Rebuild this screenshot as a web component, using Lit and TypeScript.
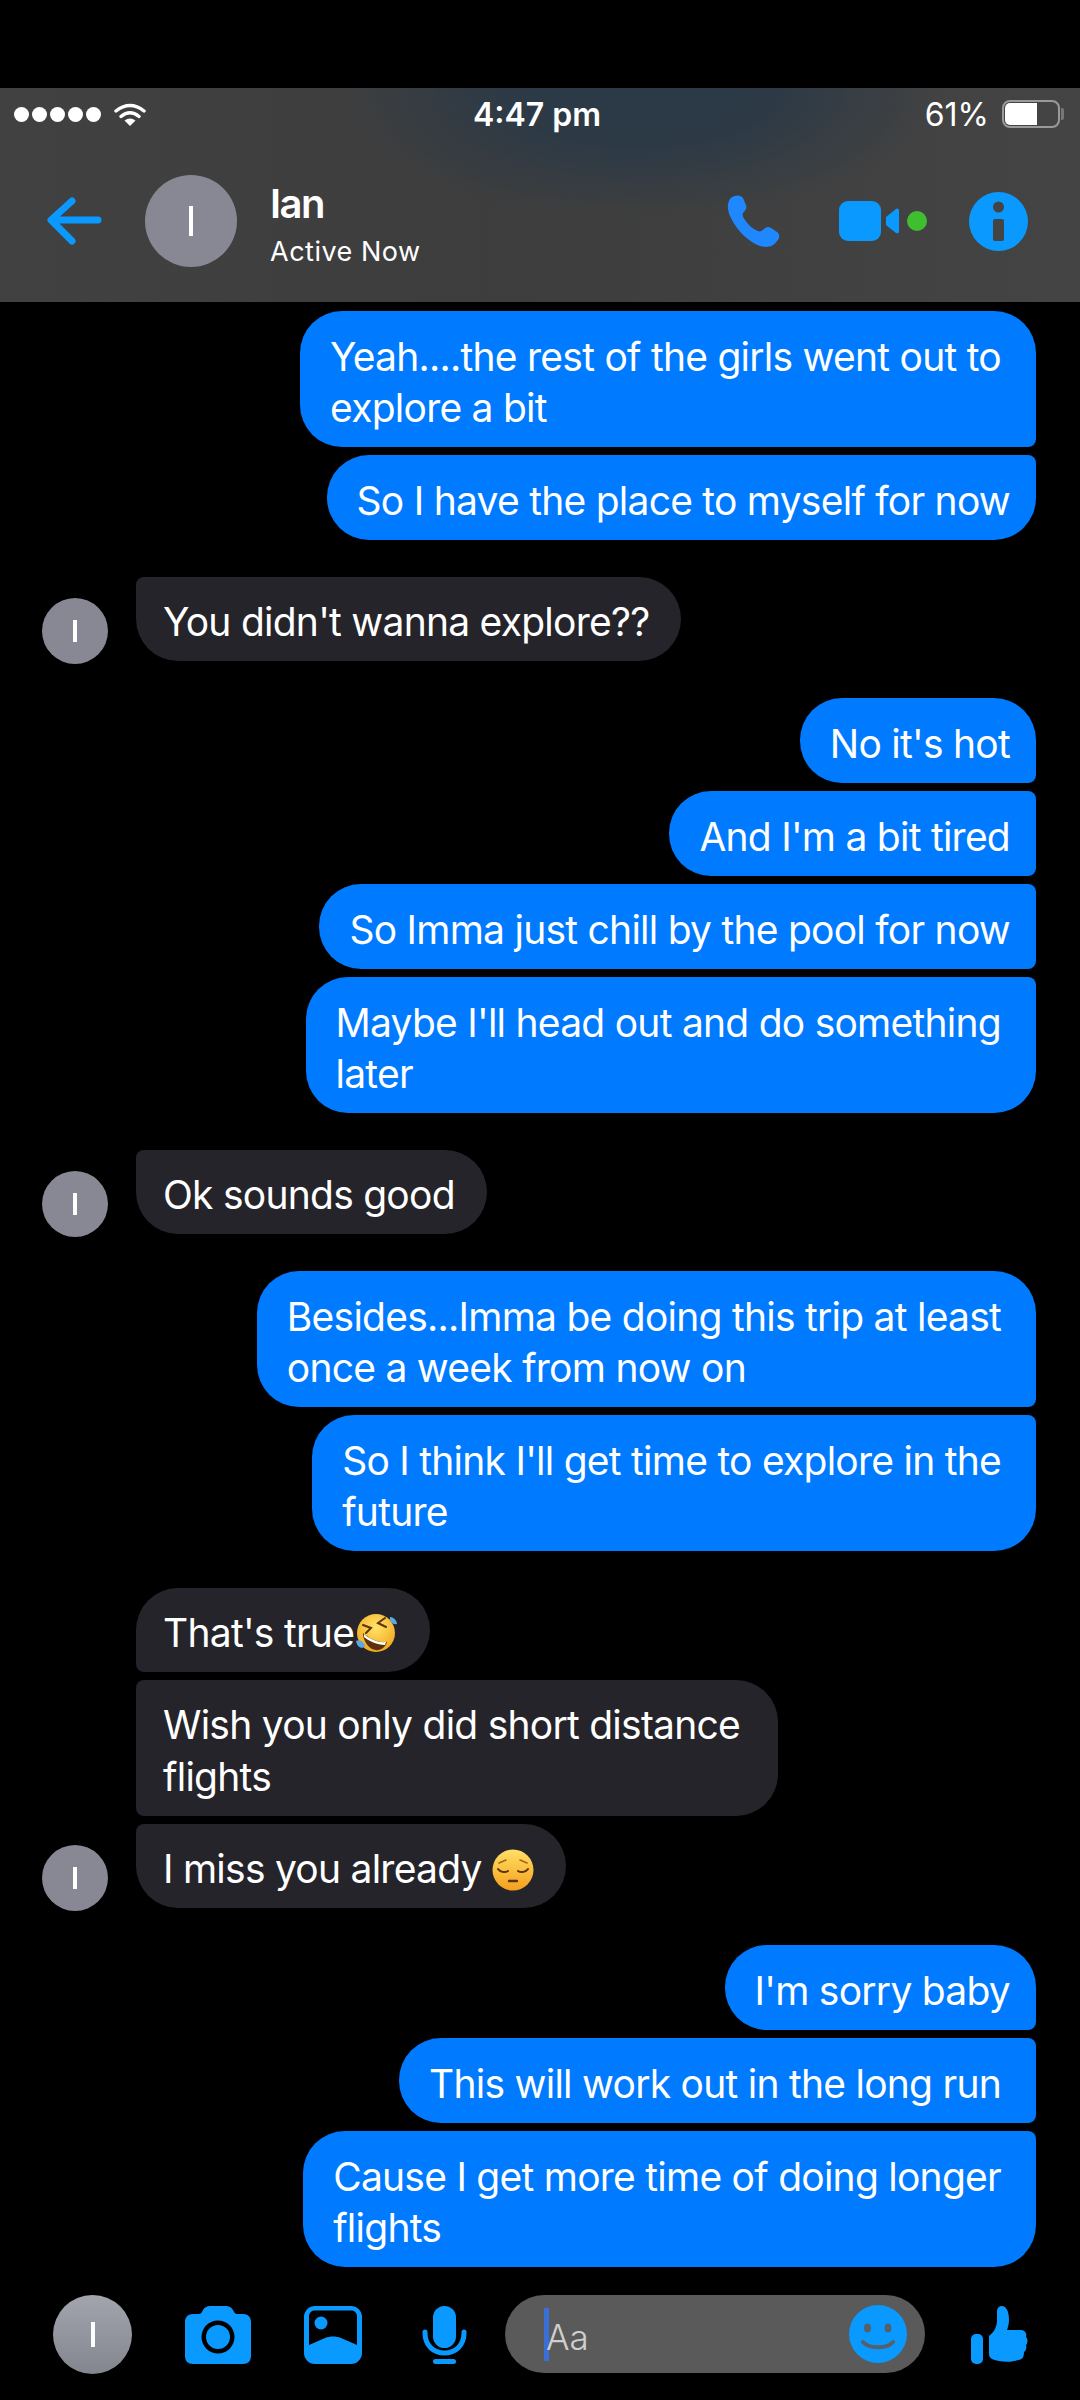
import { LitElement, html, css, svg } from "lit";
import { customElement } from "lit/decorators.js";

const rofl = html`<svg class="emoji rofl" viewBox="0 0 44 44">
  <defs>
    <radialGradient id="rg" cx="50%" cy="35%" r="65%"><stop offset="0" stop-color="#ffe46a"/><stop offset="1" stop-color="#f2a81e"/></radialGradient>
  </defs>
  <circle cx="22" cy="22" r="19" fill="url(#rg)"/>
  <path d="M9 22 C15 27 23 32 33 31 C31 38 24 41 18 38 C13 35 9 29 9 22Z" fill="#5e3208"/>
  <path d="M10 23 C16 28 24 32 32 31 L31 34 C23 34 15 30 10 26Z" fill="#fff"/>
  <path d="M9 14 L17 17 L12 22" fill="none" stroke="#5e3208" stroke-width="2" stroke-linecap="round"/>
  <path d="M31 7 L24 12 L32 16" fill="none" stroke="#5e3208" stroke-width="2" stroke-linecap="round"/>
  <path d="M2 30 C6 28 10 31 11 35 C8 39 3 36 2 30Z" fill="#5aa9e6"/>
  <path d="M36 6 C40 6 43 10 43 13 C39 14 35 11 36 6Z" fill="#5aa9e6"/>
</svg>`;

const pensive = html`<svg class="emoji" viewBox="0 0 42 42">
  <defs>
    <linearGradient id="pg" x1="0" y1="0" x2="0" y2="1"><stop offset="0" stop-color="#ffe066"/><stop offset="1" stop-color="#f59f1c"/></linearGradient>
  </defs>
  <circle cx="21" cy="21" r="20.5" fill="url(#pg)"/>
  <path d="M6 20 C8 23 13 24 16 22 M26 22 C29 24 34 23 36 20" fill="none" stroke="#5e3208" stroke-width="2" stroke-linecap="round"/>
  <path d="M7 14 L14 11 M35 14 L28 11" fill="none" stroke="#a8660f" stroke-width="1.6" stroke-linecap="round"/>
  <path d="M17 32 H25" stroke="#5e3208" stroke-width="2.4" stroke-linecap="round"/>
</svg>`;

type Group = { mine: boolean; items: unknown[][] };

const groups: Group[] = [
  { mine: true, items: [["Yeah....the rest of the girls went out to", "explore a bit"], ["So I have the place to myself for now"]] },
  { mine: false, items: [["You didn't wanna explore??"]] },
  {
    mine: true,
    items: [["No it's hot"], ["And I'm a bit tired"], ["So Imma just chill by the pool for now"], ["Maybe I'll head out and do something", "later"]],
  },
  { mine: false, items: [["Ok sounds good"]] },
  {
    mine: true,
    items: [["Besides...Imma be doing this trip at least", "once a week from now on"], ["So I think I'll get time to explore in the", "future"]],
  },
  {
    mine: false,
    items: [[html`That's true${rofl}`], ["Wish you only did short distance", "flights"], [html`I miss you already ${pensive}`]],
  },
  {
    mine: true,
    items: [["I'm sorry baby"], ["This will work out in the long run"], ["Cause I get more time of doing longer", "flights"]],
  },
];

// this one line has the same slack on the right as the wrapped ones
const looseLines = ["This will work out in the long run"];

const iconBack = svg`<path d="M52 23 H6 M26 4 L5 23 L26 44" fill="none" stroke="#0a99ff" stroke-width="7" stroke-linecap="round" stroke-linejoin="round"/>`;
const iconPhone = svg`<path d="M3 4 C6 0 13 -1 16 3 L19 10 C20 13 19 15 16 18 C15 20 16 22 18 25 C22 31 26 34 31 36 C33 37 35 36 37 34 C39 32 41 31 44 33 L50 37 C53 39 53 43 50 46 C46 52 40 53 33 51 C22 47 10 36 4 23 C0 15 0 9 3 4Z" fill="#1f88ff"/>`;

@customElement("app-root")
export class AppRoot extends LitElement {
  static styles = css`
    :host {
      display: flex;
      flex-direction: column;
      width: 1080px;
      height: 2400px;
      background: #000;
      color: #fff;
      font-family: Inter, "Liberation Sans", sans-serif;
      overflow: hidden;
    }

    .header {
      flex: none;
      margin-top: 88px;
      height: 214px;
      display: flex;
      flex-direction: column;
      background:
        radial-gradient(ellipse 300px 130px at 640px 0, #2b3947 0%, #2d3a46 45%, rgba(68, 68, 68, 0) 100%),
        linear-gradient(90deg, #414141, #3d3d3d 45%, #444 100%);
    }

    .status {
      display: grid;
      grid-template-columns: 1fr auto 1fr;
      align-items: center;
      height: 52px;
      padding: 0 20px 0 14px;
    }
    .status-left {
      display: flex;
      align-items: center;
    }
    .dots {
      display: flex;
      gap: 3px;
      margin-right: 13px;
    }
    .dots i {
      width: 15px;
      height: 15px;
      border-radius: 50%;
      background: #fff;
    }
    .time {
      font-size: 32px;
      font-weight: 600;
    }
    .status-right {
      display: flex;
      align-items: center;
      justify-content: flex-end;
      gap: 13px;
      font-size: 32px;
    }
    .battery {
      width: 58px;
      height: 28px;
      box-sizing: border-box;
      border: 2px solid #9a9a9a;
      border-radius: 8px;
      padding: 1px;
      position: relative;
    }
    .battery::before {
      content: "";
      display: block;
      width: 61%;
      height: 100%;
      background: #fff;
      border-radius: 5px 0 0 5px;
    }
    .battery::after {
      content: "";
      position: absolute;
      right: -6px;
      top: 6px;
      width: 3px;
      height: 12px;
      background: #777;
      border-radius: 0 2px 2px 0;
    }

    .nav {
      flex: 1;
      display: flex;
      align-items: center;
      padding: 0 52px 0 46px;
    }
    .nav-avatar {
      width: 92px;
      height: 92px;
      margin-left: 41px;
      background: #878893;
    }
    .who {
      margin: 8px 0 0 33px;
      display: flex;
      flex-direction: column;
    }
    .name {
      font-size: 40px;
      font-weight: 600;
      line-height: 48px;
      letter-spacing: -1.5px;
    }
    .active {
      font-size: 27px;
      line-height: 36px;
      letter-spacing: 0.5px;
      margin-top: 6px;
    }
    .actions {
      margin-left: auto;
      display: flex;
      align-items: center;
    }
    .video {
      margin: 0 42px 0 59px;
    }

    .avatar {
      flex: none;
      border-radius: 50%;
      display: flex;
      align-items: center;
      justify-content: center;
    }
    .avatar::before {
      content: "";
      width: 4px;
      height: 32%;
      background: #fff;
    }

    .messages {
      flex: 1;
      min-height: 0;
      display: flex;
      flex-direction: column;
      gap: 37px;
      padding: 9px 44px 0 42px;
    }
    .group {
      display: flex;
      flex-direction: column;
      gap: 8px;
    }
    .row {
      display: flex;
      align-items: flex-end;
    }
    .mine .row {
      justify-content: flex-end;
    }
    .slot {
      flex: none;
      width: 66px;
      margin-right: 28px;
    }
    .slot .avatar {
      width: 66px;
      height: 66px;
      margin-bottom: -3px;
      background: #878893;
    }
    .bubble {
      padding: 19px 32px 13px 27px;
      font-size: 39px;
      line-height: 52px;
      letter-spacing: -0.75px;
      white-space: nowrap;
      background: #25242a;
      border-radius: 42px;
    }
    .bubble.loose {
      padding-right: 38px;
    }
    .mine .bubble {
      padding: 20px 26px 14px 30px;
      line-height: 51px;
      background: #007aff;
    }
    .mine .bubble.loose {
      padding-right: 35px;
    }
    .mine .bubble.top {
      border-bottom-right-radius: 8px;
    }
    .mine .bubble.mid {
      border-top-right-radius: 8px;
      border-bottom-right-radius: 8px;
    }
    .mine .bubble.end {
      border-top-right-radius: 8px;
    }
    .theirs .bubble.top {
      border-bottom-left-radius: 8px;
    }
    .theirs .bubble.mid {
      border-top-left-radius: 8px;
      border-bottom-left-radius: 8px;
    }
    .theirs .bubble.end {
      border-top-left-radius: 8px;
    }
    .emoji {
      width: 42px;
      height: 42px;
      vertical-align: -8px;
    }
    .rofl {
      width: 44px;
      height: 44px;
    }

    .composer {
      flex: none;
      height: 136px;
      box-sizing: border-box;
      padding: 31px 52px 0 53px;
      display: flex;
      align-items: flex-start;
    }
    .composer-avatar {
      width: 79px;
      height: 79px;
      background: linear-gradient(#a2a5ad, #83868e);
    }
    .tool {
      margin-top: 11px;
      flex: none;
    }
    .tool.camera,
    .tool.picture {
      margin-left: 53px;
    }
    .tool.mic {
      margin-left: 60px;
    }
    .tool.like {
      margin-left: 46px;
    }
    .input {
      width: 420px;
      height: 78px;
      margin-left: 38px;
      box-sizing: border-box;
      padding: 0 18px 0 39px;
      display: flex;
      align-items: center;
      background: #5a5a5a;
      border-radius: 39px;
      color: #cfcfcf;
      font-size: 35px;
      font-weight: 300;
    }
    .hint {
      padding-top: 5px;
    }
    .caret {
      width: 5px;
      height: 53px;
      background: #3a6fd8;
      margin-right: -3px;
    }
    .input svg {
      margin-left: auto;
    }
  `;

  renderBubble(lines: unknown[], i: number, n: number) {
    const pos = i === n - 1 ? "end" : i === 0 ? "top" : "mid";
    const loose = lines.length > 1 || looseLines.includes(lines[0] as string);
    return html`<div class="bubble ${pos} ${loose ? "loose" : ""}">
      ${lines.map((l, j) => (j ? html`<br />${l}` : l))}
    </div>`;
  }

  render() {
    return html`
      <div class="header">
        <div class="status">
          <div class="status-left">
            <div class="dots"><i></i><i></i><i></i><i></i><i></i></div>
            <svg width="32" height="23" viewBox="0 0 32 23">
              <path d="M2 8 Q16 -3 30 8 M7 13.5 Q16 6 25 13.5" fill="none" stroke="#fff" stroke-width="3.4" stroke-linecap="round" />
              <path d="M10.5 17.5 Q16 13.5 21.5 17.5 L16 23Z" fill="#fff" />
            </svg>
          </div>
          <div class="time">4:47 pm</div>
          <div class="status-right">61%<div class="battery"></div></div>
        </div>
        <div class="nav">
          <svg width="58" height="48" viewBox="0 0 58 48">${iconBack}</svg>
          <div class="avatar nav-avatar"></div>
          <div class="who">
            <div class="name">Ian</div>
            <div class="active">Active Now</div>
          </div>
          <div class="actions">
            <svg width="53" height="53" viewBox="0 0 53 53">${iconPhone}</svg>
            <svg class="video" width="88" height="40" viewBox="0 0 88 40">
              <rect width="42" height="40" rx="9" fill="#0a99ff" />
              <path d="M47 16 L57 8 C59 7 60 8 60 10 V30 C60 32 59 33 57 32 L47 24Z" fill="#0a99ff" />
              <circle cx="78" cy="20" r="10" fill="#3fbf2f" />
            </svg>
            <svg width="59" height="59" viewBox="0 0 59 59">
              <circle cx="29.5" cy="29.5" r="29.5" fill="#0a99ff" />
              <circle cx="29.5" cy="15" r="5.5" fill="#444" />
              <rect x="24" y="27" width="11" height="22" rx="2" fill="#444" />
            </svg>
          </div>
        </div>
      </div>

      <div class="messages">
        ${groups.map(
          (g) => html`
            <div class="group ${g.mine ? "mine" : "theirs"}">
              ${g.items.map(
                (lines, i) => html`
                  <div class="row">
                    ${g.mine
                      ? ""
                      : html`<div class="slot">
                          ${i === g.items.length - 1 ? html`<div class="avatar"></div>` : ""}
                        </div>`}
                    ${this.renderBubble(lines, i, g.items.length)}
                  </div>
                `
              )}
            </div>
          `
        )}
      </div>

      <div class="composer">
        <div class="avatar composer-avatar"></div>
        <svg class="tool camera" width="66" height="58" viewBox="0 0 66 58">
          <path d="M8 8 H14 C16 8 17 6 18 4 C20 1 22 0 25 0 H41 C44 0 46 1 48 4 C49 6 50 8 52 8 H58 C63 8 66 11 66 16 V50 C66 55 63 58 58 58 H8 C3 58 0 55 0 50 V16 C0 11 3 8 8 8Z" fill="#0a99ff" />
          <circle cx="33" cy="31" r="16.5" fill="#000" />
          <circle cx="33" cy="31" r="12" fill="#0a99ff" />
        </svg>
        <svg class="tool picture" width="58" height="58" viewBox="0 0 58 58">
          <rect width="58" height="58" rx="11" fill="#0a99ff" />
          <path d="M5 11 C5 7 7 4.500 11 4.500 H47 C51 4.500 53 7 53 11 V39 L37 32 C32 30 26 30 21 32 L5 39Z" fill="#000" />
          <circle cx="17" cy="17" r="6.500" fill="#0a99ff" />
        </svg>
        <svg class="tool mic" width="45" height="58" viewBox="0 0 45 58">
          <rect x="11" width="23" height="42" rx="11.500" fill="#0a99ff" />
          <path d="M3 26 V27 C3 40 12 47 22.500 47 C33 47 42 40 42 27 V26" fill="none" stroke="#0a99ff" stroke-width="5" stroke-linecap="round" />
          <rect x="11" y="53" width="23" height="5" rx="2.500" fill="#0a99ff" />
        </svg>
        <div class="input">
          <span class="caret"></span><span class="hint">Aa</span>
          <svg width="58" height="58" viewBox="0 0 58 58">
            <circle cx="29" cy="29" r="29" fill="#0a99ff" />
            <ellipse cx="18.500" cy="23" rx="3.500" ry="4.500" fill="#54606a" />
            <ellipse cx="39" cy="23" rx="3.500" ry="4.500" fill="#54606a" />
            <path d="M14 37 C20 44 38 44 44 37" fill="none" stroke="#54606a" stroke-width="4" stroke-linecap="round" />
          </svg>
        </div>
        <svg class="tool like" width="57" height="58" viewBox="0 0 57 58">
          <rect y="28" width="12" height="30" rx="5" fill="#0a99ff" />
          <path d="M18 30 C22 27 26 22 26 14 V6 C26 2 28 0 31 0 C35 0 38 5 38 14 C38 18 37 21 36 24 H49 C54 24 56 27 55 31 C57 33 57 37 55 39 C56 42 55 45 53 46 C53 50 52 54 47 54 C40 57 28 56 21 53 C19 52 18 50 18 48Z" fill="#0a99ff" />
        </svg>
      </div>
    `;
  }
}
